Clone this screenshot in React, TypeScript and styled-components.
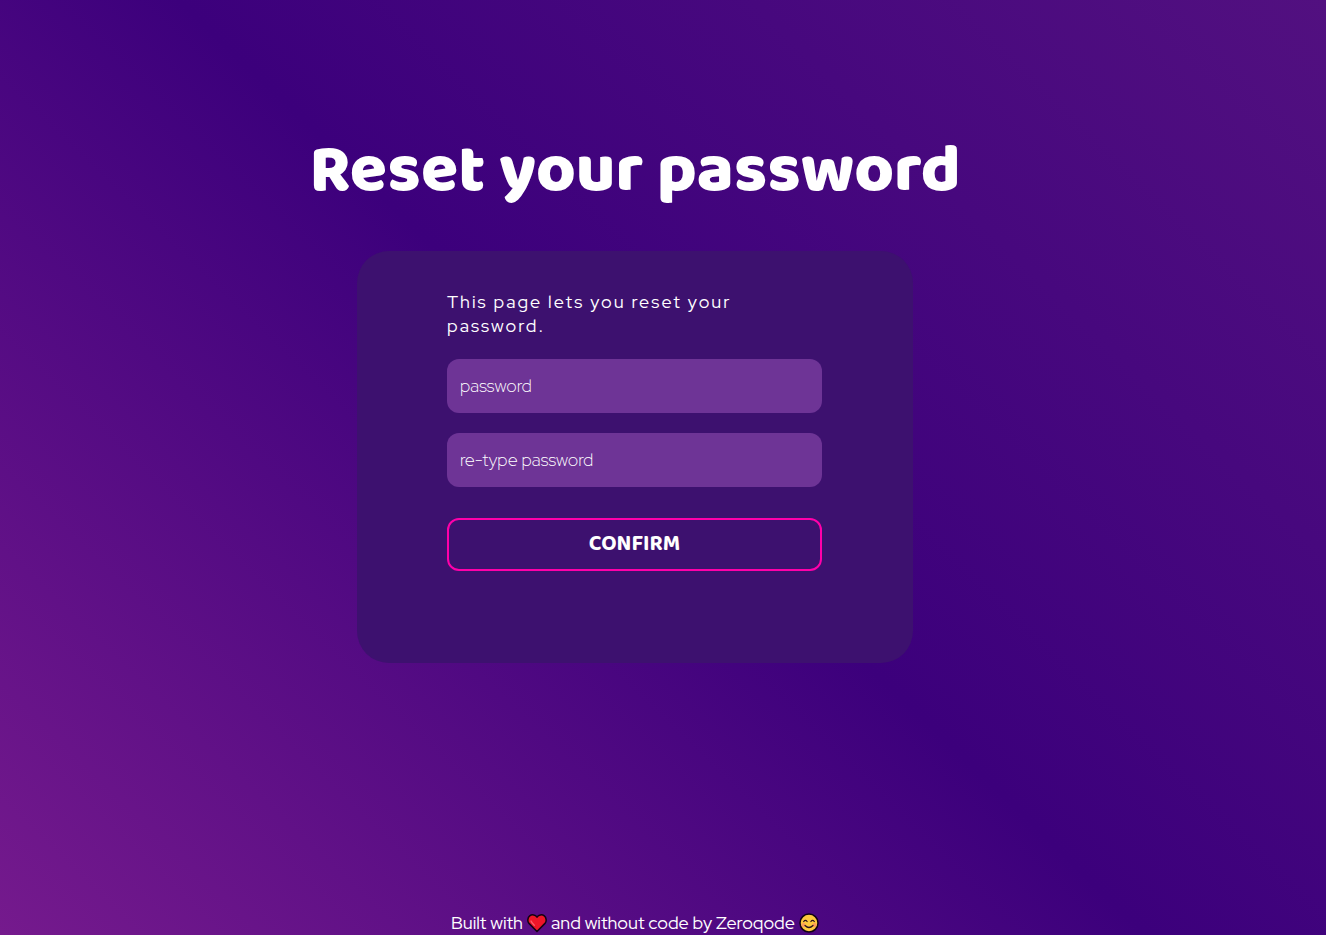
import React from "react";
import styled, { createGlobalStyle } from "styled-components";

const GlobalStyle = createGlobalStyle`
  * {
    box-sizing: border-box;
  }

  body {
    margin: 0;
    color: #ffffff;
    font-family: "Red Hat Display", Inter, "Open Sans", sans-serif;
  }
`;

const Page = styled.div`
  display: flex;
  flex-direction: column;
  align-items: center;
  min-height: 100vh;
  padding: 130px 56px 0 0;
  background: linear-gradient(44deg, #751a8d 0%, #3c007c 50%, #521080 100%);
`;

const Title = styled.h1`
  margin: 0 0 37px;
  font-family: "Baloo 2", "Open Sans", sans-serif;
  font-size: 68px;
  font-weight: 800;
  line-height: 84px;
  text-align: center;
`;

const Card = styled.form`
  display: flex;
  flex-direction: column;
  width: 100%;
  max-width: 556px;
  padding: 39px 91px 92px 90px;
  border-radius: 32px;
  background: #3d116f;
`;

const Intro = styled.p`
  max-width: 320px;
  margin: 0 0 21px;
  font-size: 18px;
  line-height: 24px;
  letter-spacing: 2px;
`;

const Field = styled.input`
  height: 54px;
  margin-bottom: 20px;
  padding: 0 13px 2px;
  border: none;
  border-radius: 12px;
  outline: none;
  background: #6e3496;
  color: #ffffff;
  font-family: "Red Hat Display", Inter, "Open Sans", sans-serif;
  font-size: 18px;
  font-weight: 300;

  &::placeholder {
    color: #ffffff;
    opacity: 1;
  }
`;

const ConfirmButton = styled.button`
  height: 53px;
  margin-top: 11px;
  padding: 0 0 2px;
  border: 2px solid #ff00aa;
  border-radius: 12px;
  background: transparent;
  color: #ffffff;
  font-family: "Baloo 2", "Open Sans", sans-serif;
  font-size: 22px;
  font-weight: 700;
  line-height: 24px;
  cursor: pointer;
`;

const Footer = styled.footer`
  display: flex;
  align-items: center;
  gap: 4px;
  margin-top: auto;
  font-size: 18px;
  line-height: 24px;
`;

const Heart = () => (
  <svg width="20" height="20" viewBox="0 0 20 20" role="img" aria-label="love">
    <path
      d="M10 18.5 2 10.4C.2 8.4.5 4.7 2.7 2.9 5 1.1 8.3 1.7 10 4.1 11.7 1.7 15 1.1 17.3 2.9c2.2 1.8 2.5 5.5.7 7.5Z"
      fill="#ee1528"
      stroke="#120312"
      strokeWidth="1.5"
      strokeLinejoin="round"
    />
    <path d="M4 8c.7 1.8 2 3 3.3 4.2" stroke="#f8606c" strokeWidth="1.3" strokeLinecap="round" fill="none" />
  </svg>
);

const Smile = () => (
  <svg width="20" height="20" viewBox="0 0 20 20" role="img" aria-label="smile">
    <circle cx="10" cy="10" r="9" fill="#ffc83d" stroke="#120312" strokeWidth="1.5" />
    <circle cx="4.5" cy="12" r="2" fill="#ff9a5c" />
    <circle cx="15.5" cy="12" r="2" fill="#ff9a5c" />
    <path
      d="M4.7 8.5q1.7-2.4 3.4 0M11.9 8.5q1.7-2.4 3.4 0M6 12.5q4 4 8 0"
      stroke="#2a1220"
      strokeWidth="1.2"
      strokeLinecap="round"
      fill="none"
    />
  </svg>
);

export default function App() {
  return (
    <>
      <GlobalStyle />
      <Page>
        <Title>Reset your password</Title>
        <Card onSubmit={(event: React.FormEvent) => event.preventDefault()}>
          <Intro>This page lets you reset your password.</Intro>
          <Field type="password" aria-label="password" placeholder="password" />
          <Field type="password" aria-label="re-type password" placeholder="re-type password" />
          <ConfirmButton type="submit">CONFIRM</ConfirmButton>
        </Card>
        <Footer>
          <span>Built with</span>
          <Heart />
          <span>and without code by Zeroqode</span>
          <Smile />
        </Footer>
      </Page>
    </>
  );
}
